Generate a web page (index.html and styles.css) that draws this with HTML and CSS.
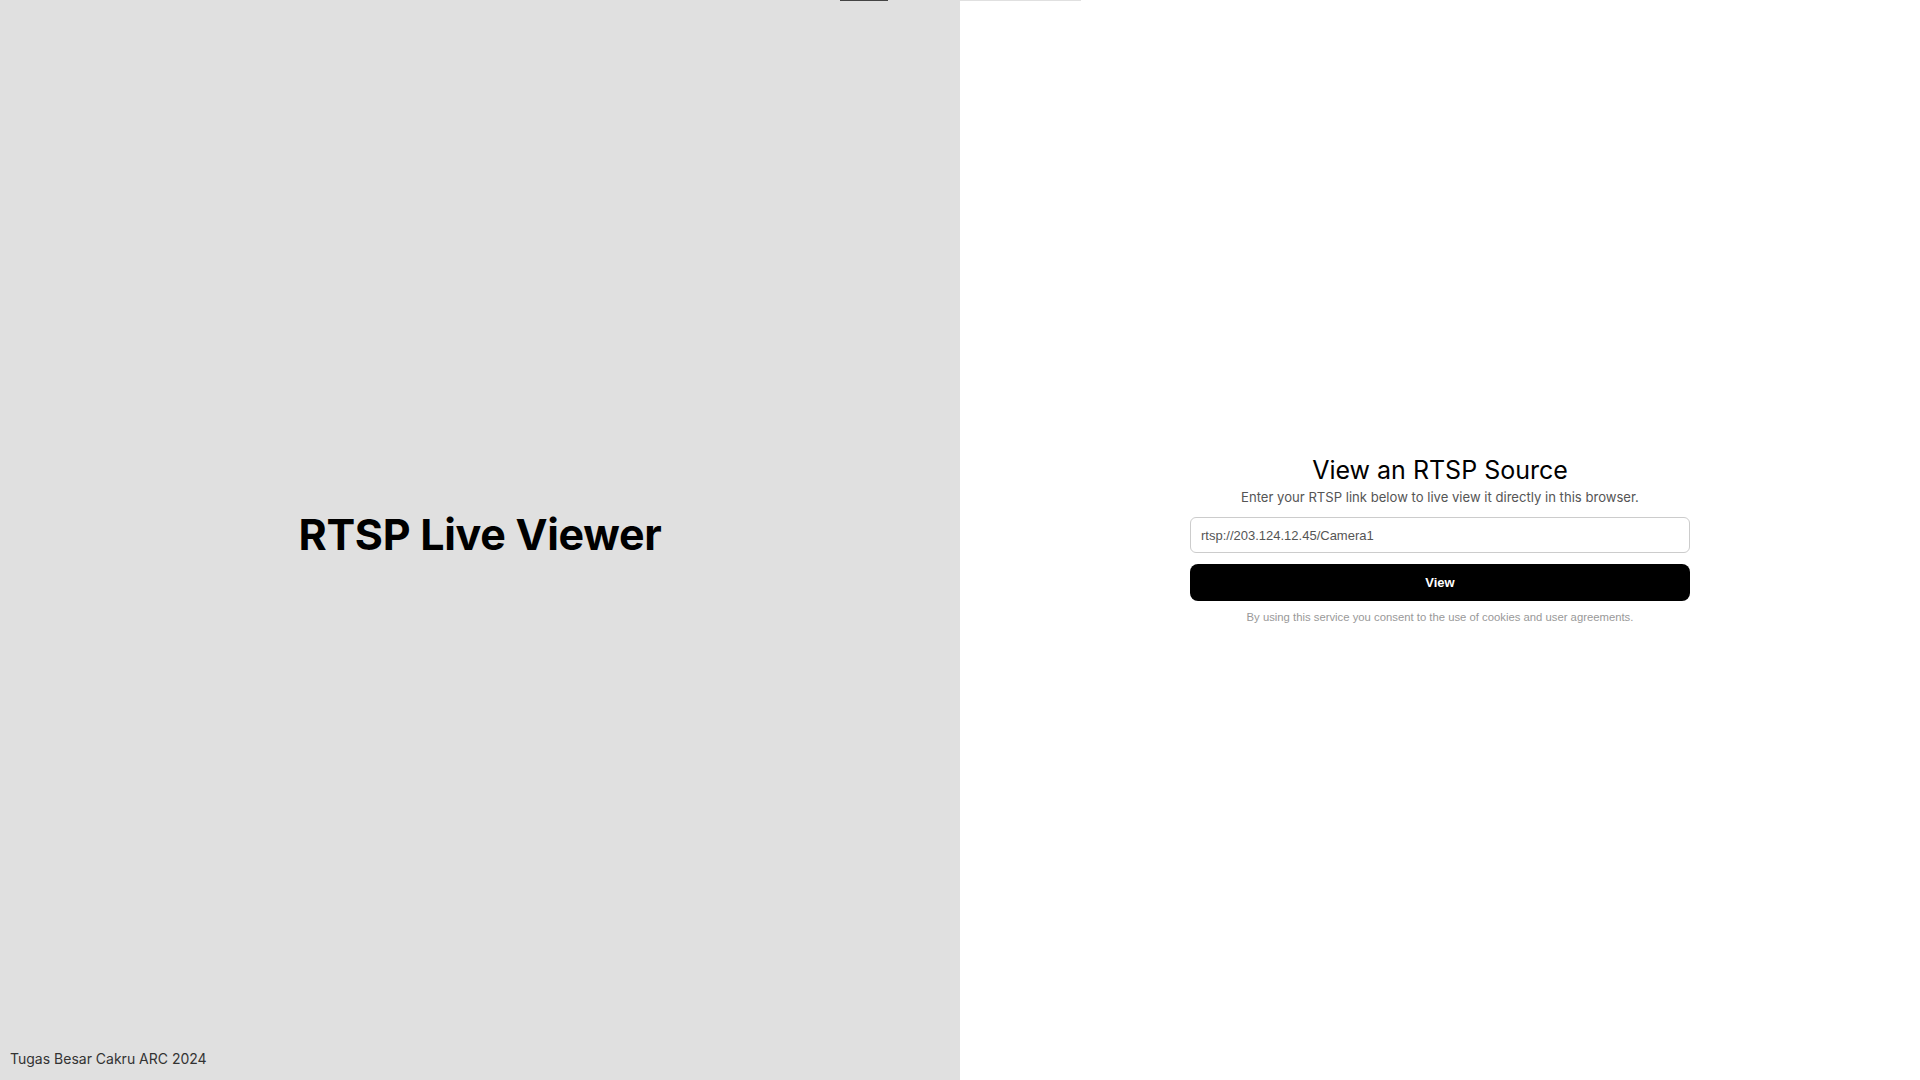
FILE: index.html
```html
<!DOCTYPE html>
<html lang="en">
<head>
<meta charset="utf-8">
<title>RTSP Live Viewer</title>
<link rel="stylesheet" href="styles.css">
</head>
<body>
<div class="topbar"><span class="bar-dark"></span><span class="bar-light"></span></div>
<main class="page">
  <section class="hero">
    <div class="hero-center">
      <h1 class="hero-title">RTSP Live Viewer</h1>
    </div>
    <footer class="hero-footer">Tugas Besar Cakru ARC 2024</footer>
  </section>
  <section class="panel">
    <form class="form">
      <h2 class="form-title">View an RTSP Source</h2>
      <p class="form-sub">Enter your RTSP link below to live view it directly in this browser.</p>
      <input class="form-input" type="text" value="rtsp://203.124.12.45/Camera1">
      <button class="form-btn" type="button">View</button>
      <p class="form-note">By using this service you consent to the use of cookies and user agreements.</p>
    </form>
  </section>
</main>
</body>
</html>
```
FILE: styles.css
```css
html, body {
  margin: 0;
  padding: 0;
  height: 100%;
}
body {
  font-family: "Inter", "Liberation Sans", sans-serif;
  background: #fff;
  overflow: hidden;
}
.topbar {
  position: absolute;
  top: 0;
  left: 840px;
  display: flex;
  height: 1px;
  z-index: 5;
}
.bar-dark {
  display: block;
  width: 48px;
  height: 1px;
  background: #444;
}
.bar-light {
  display: block;
  width: 193px;
  height: 1px;
  background: #e0e0e0;
}
.page {
  display: flex;
  height: 100vh;
}
.hero {
  width: 960px;
  background: #e0e0e0;
  display: flex;
  flex-direction: column;
}
.hero-center {
  flex: 1;
  display: flex;
  align-items: center;
  justify-content: center;
  padding-top: 17px;
}
.hero-title {
  margin: 0;
  font-size: 43px;
  font-weight: 700;
  color: #000;
  letter-spacing: -0.3px;
}
.hero-footer {
  padding: 0 0 12px 10px;
  font-size: 14px;
  color: #333;
  line-height: 18px;
}
.panel {
  flex: 1;
  display: flex;
  align-items: center;
  justify-content: center;
  padding-bottom: 3px;
}
.form {
  width: 500px;
  display: flex;
  flex-direction: column;
  align-items: center;
}
.form-title {
  margin: 0;
  font-size: 25px;
  font-weight: 400;
  color: #000;
  line-height: 32px;
}
.form-sub {
  margin: 2px 0 11px;
  font-size: 13.1px;
  color: #555;
  line-height: 18px;
}
.form-input {
  box-sizing: border-box;
  width: 100%;
  height: 36px;
  border: 1px solid #ccc;
  border-radius: 6px;
  padding: 0 10px;
  font-family: "Liberation Sans", Arial, sans-serif;
  font-size: 13px;
  color: #555;
  outline: none;
}
.form-btn {
  box-sizing: border-box;
  width: 100%;
  height: 37px;
  margin-top: 11px;
  border: none;
  border-radius: 8px;
  background: #000;
  color: #fff;
  font-family: "Liberation Sans", Arial, sans-serif;
  font-size: 13px;
  font-weight: 700;
}
.form-note {
  margin: 10px 0 0;
  font-family: "Liberation Sans", Arial, sans-serif;
  font-size: 11.3px;
  color: #999;
}
```
